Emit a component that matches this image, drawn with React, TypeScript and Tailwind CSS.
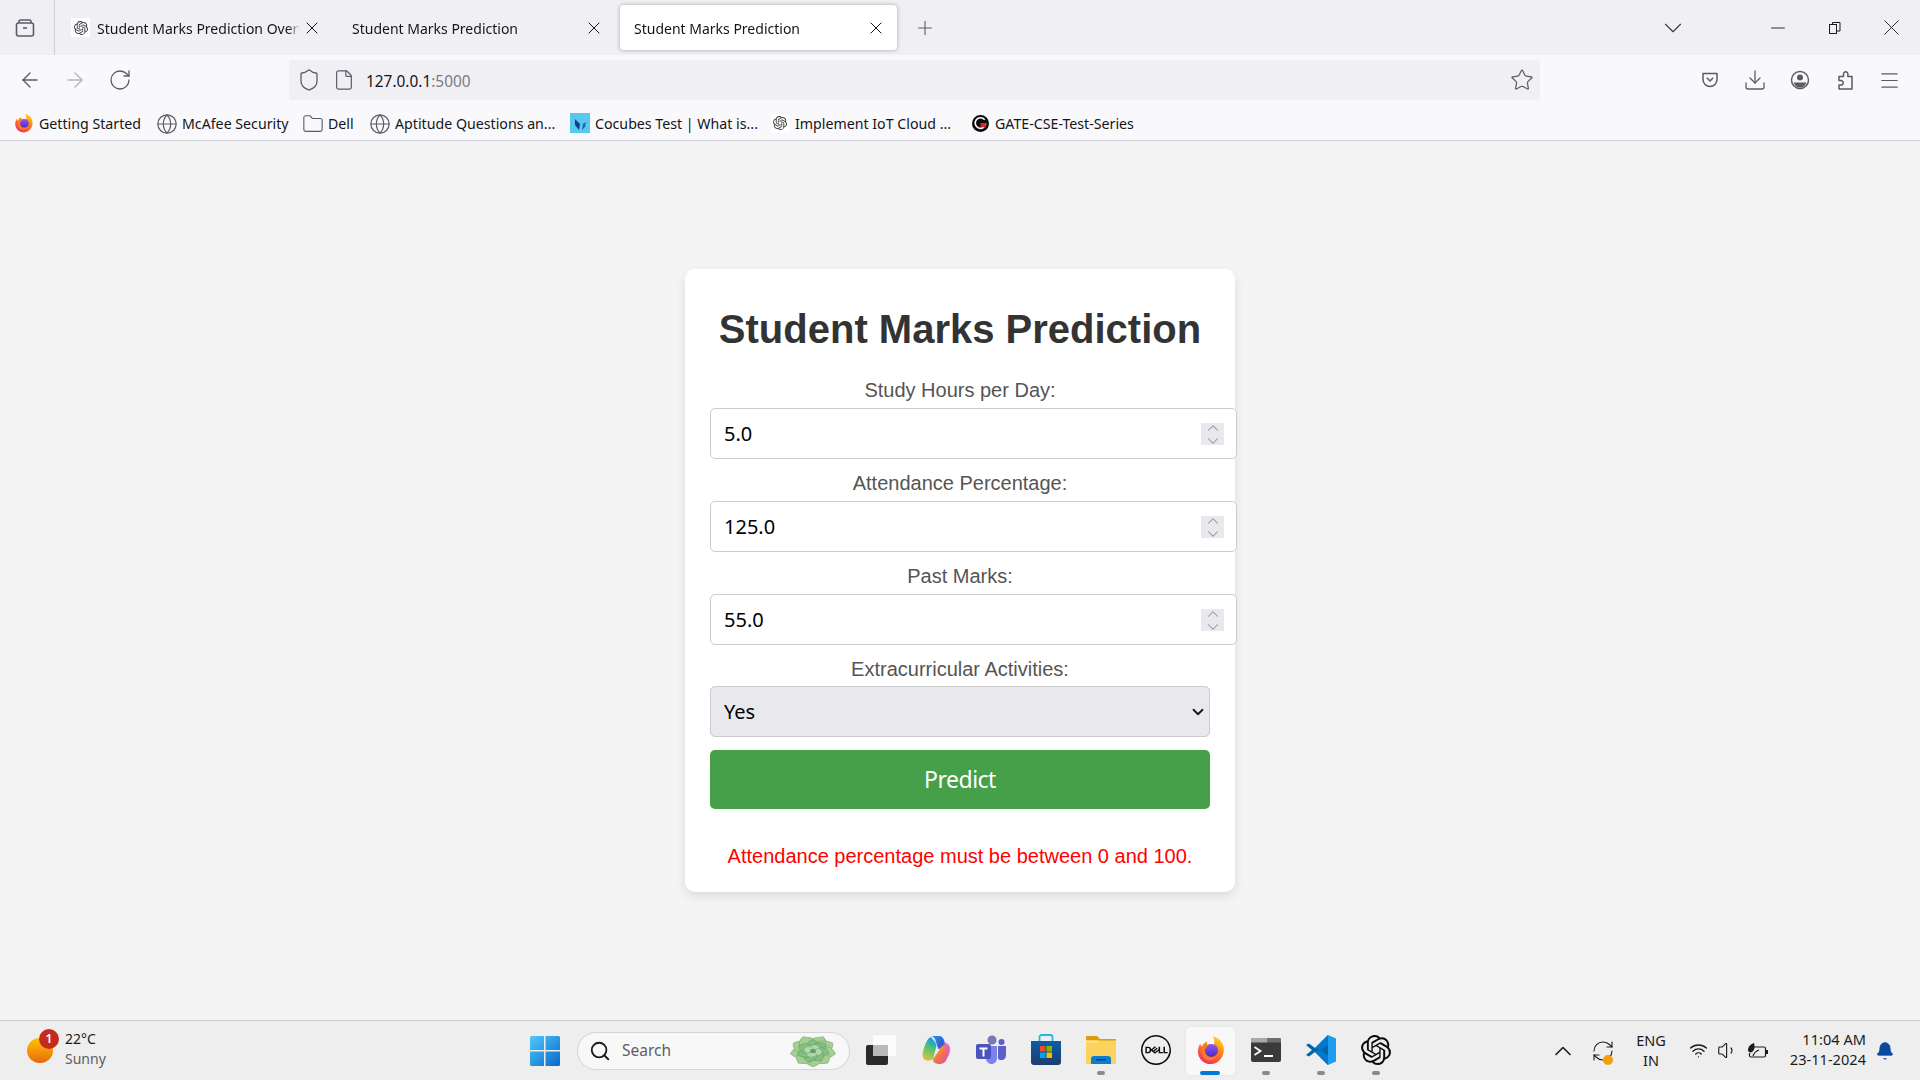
import React from 'react';
import {
  ArrowLeft,
  ArrowRight,
  Bell,
  ChevronDown,
  ChevronUp,
  Download,
  File,
  Folder,
  Globe,
  Menu,
  Minus,
  Plus,
  RefreshCw,
  RotateCw,
  Search,
  Shield,
  Star,
  Volume1,
  Wifi,
  X,
} from 'lucide-react';
import { SiOpenai, SiDell } from 'react-icons/si';

const FirefoxLogo = ({ size = 16, id = 'fx' }: { size?: number; id?: string }) => (
  <svg width={size} height={size} viewBox="0 0 32 32">
    <defs>
      <linearGradient id={`${id}-a`} x1="0.8" y1="0" x2="0.3" y2="1">
        <stop offset="0" stopColor="#ffe226" />
        <stop offset="0.4" stopColor="#ff8a16" />
        <stop offset="1" stopColor="#f02c6c" />
      </linearGradient>
      <linearGradient id={`${id}-b`} x1="0.5" y1="0" x2="0.5" y2="1">
        <stop offset="0" stopColor="#9059ff" />
        <stop offset="1" stopColor="#4f2ab8" />
      </linearGradient>
    </defs>
    <path
      fill={`url(#${id}-a)`}
      d="M16 31C8 31 2 25 2 17.5c0-3 .9-5.9 2.6-8.3.2 1.4.7 2.6 1.6 3.4C7 9.8 9.4 7.600 12 6.800c-.5 1.500-.3 2.800.3 3.600 2.500-.8 5-.6 6.800.4C20 7 19.500 3.500 18 1c5.200 1.700 9.500 5 11 10 1.500 5 .7 10.300-2.500 14.300-2.500 3.700-6.300 5.700-10.500 5.700z"
    />
    <circle cx="16.500" cy="16.500" r="7" fill={`url(#${id}-b)`} />
    <path fill="#ff7a1a" d="M6 14c2-2.500 5-3.500 7.500-2.500-2.500 1-4.500 3.500-4 6.500.5 3.500 4 6 7.500 5.500 2.500-.3 4.500-1.600 5.500-3.500-.5 4.500-4.500 7.500-9 7-5-.5-8.500-6.500-7.500-13z" />
  </svg>
);

const WindowsLogo = () => (
  <svg width="30" height="30" viewBox="0 0 30 30">
    <defs>
      <linearGradient id="win" x1="0" y1="0" x2="1" y2="1">
        <stop offset="0" stopColor="#52c8fb" />
        <stop offset="1" stopColor="#0669c9" />
      </linearGradient>
    </defs>
    <path fill="url(#win)" d="M0 1.500A1.500 1.500 0 0 1 1.500 0H14v14H0zM15.500 0H28.500A1.500 1.500 0 0 1 30 1.500V14H15.500zM0 15.500H14V30H1.500A1.500 1.500 0 0 1 0 28.500zM15.500 15.500H30V28.500A1.500 1.500 0 0 1 28.500 30H15.500z" />
  </svg>
);

const PETAL = 'M0 0C-6 -4 -6 -11 0 -15C6 -11 6 -4 0 0z';

const Succulent = () => (
  <svg width="46" height="32" viewBox="-23 -16 46 32">
    <g transform="scale(1.45 1)">
      {[-100, -60, -25, 25, 60, 100, 140, 180, 220].map((a) => (
        <path key={a} d={PETAL} fill="#a3cf90" stroke="#7fb278" strokeWidth="0.5" transform={`rotate(${a}) scale(1.35 1.05)`} />
      ))}
      {[0, 50, 100, 150, 200, 250, 300].map((a) => (
        <path key={a} d={PETAL} fill="#86bd80" stroke="#5f9c66" strokeWidth="0.5" transform={`rotate(${a}) scale(1 0.75)`} />
      ))}
      {[20, 110, 200, 290].map((a) => (
        <path key={a} d={PETAL} fill="#b1d8a9" stroke="#5f9c66" strokeWidth="0.6" transform={`rotate(${a}) scale(0.8 0.45)`} />
      ))}
      <circle r="2" fill="#5f9c66" />
    </g>
  </svg>
);

const TaskView = () => (
  <svg width="30" height="30" viewBox="0 0 30 30">
    <rect x="0" y="10" width="22" height="20" rx="2" fill="#2a2a2a" />
    <rect x="7" y="0" width="23" height="21" rx="2" fill="#ffffff" fillOpacity="0.75" />
    <rect x="7" y="10" width="15" height="11" fill="#b9b9b9" />
  </svg>
);

const Copilot = () => (
  <svg width="30" height="30" viewBox="0 0 30 30">
    <defs>
      <linearGradient id="cp-a" x1="0" y1="0" x2="1" y2="0.6">
        <stop offset="0" stopColor="#1e9be8" />
        <stop offset="1" stopColor="#3a4fd0" />
      </linearGradient>
      <linearGradient id="cp-b" x1="0" y1="0" x2="1" y2="1">
        <stop offset="0" stopColor="#f9c13c" />
        <stop offset="0.5" stopColor="#f4714a" />
        <stop offset="1" stopColor="#d64fb8" />
      </linearGradient>
      <linearGradient id="cp-c" x1="0" y1="1" x2="0.3" y2="0">
        <stop offset="0" stopColor="#f7c23c" />
        <stop offset="0.6" stopColor="#5cc46a" />
        <stop offset="1" stopColor="#19a2d8" />
      </linearGradient>
    </defs>
    <path fill="url(#cp-c)" d="M10 2C7 3 5 7 3 13c-2 6-2 10 1 12 2 1 6 1 8-1l3-11c.5-2 1-3.500-1-6z" />
    <path fill="url(#cp-a)" d="M10 1h8c3 0 4.500 2 5.300 5l2 6-8 2-3-9c-.7-2-2-3.500-4-4z" />
    <path fill="url(#cp-b)" d="M12 24c-1 3 3 5 7 5 4 0 6.500-3 8-8 1.500-5 2-10-1-11-3-.8-5 1-6.500 3z" />
    <path fill="#e25cd0" fillOpacity="0.75" d="M22 8c3-1 6 0 7 4 .8 3 0 7-2 10-1-5-2-10-5-14z" />
  </svg>
);

const Teams = () => (
  <svg width="30" height="30" viewBox="0 0 30 30">
    <circle cx="16" cy="5" r="4.500" fill="#6264a7" fillOpacity="0.85" />
    <circle cx="25.500" cy="7" r="3" fill="#5b5fc7" />
    <path fill="#7b83eb" d="M10 11h11v12c0 3.500-2.500 6-5.500 6S10 26.500 10 23z" />
    <path fill="#5b5fc7" d="M22 11h8v9c0 3-2 5-4.500 5-1.500 0-2.800-.5-3.500-1.500z" />
    <rect x="0" y="9" width="15" height="15" rx="2" fill="#4b53bc" />
    <path fill="#ffffff" d="M3.500 12.500h8v2h-3v7h-2v-7h-3z" />
  </svg>
);

const StoreLogo = () => (
  <svg width="30" height="32" viewBox="0 0 30 32">
    <defs>
      <linearGradient id="st" x1="0" y1="0" x2="0" y2="1">
        <stop offset="0" stopColor="#0b5da8" />
        <stop offset="1" stopColor="#1e3d6d" />
      </linearGradient>
    </defs>
    <path d="M8.500 7V3a2 2 0 0 1 2-2h9a2 2 0 0 1 2 2v4" fill="none" stroke="#25b6e8" strokeWidth="1.800" />
    <path fill="url(#st)" d="M0 7h30v21a3 3 0 0 1-3 3H3a3 3 0 0 1-3-3z" />
    <rect x="9" y="12" width="5.500" height="5.500" fill="#ea4e25" />
    <rect x="15.500" y="12" width="5.500" height="5.500" fill="#7fba00" />
    <rect x="9" y="18.500" width="5.500" height="5.500" fill="#00a4ef" />
    <rect x="15.500" y="18.500" width="5.500" height="5.500" fill="#ffb900" />
  </svg>
);

const Explorer = () => (
  <svg width="30" height="30" viewBox="0 0 30 30">
    <path fill="#d99e0b" d="M0 2a1 1 0 0 1 1-1h10l3 3h16v6H0z" />
    <path fill="#fcd35f" d="M0 5.500h30V29H0z" />
    <path fill="#ffe48a" d="M0 5.500h13l-2.500 2H0z" />
    <path fill="#0a7fd0" d="M5 29v-5a3 3 0 0 1 3-3h14a3 3 0 0 1 3 3v5z" />
    <rect x="10" y="24" width="10" height="1.500" fill="#05406e" />
  </svg>
);

const Terminal = () => (
  <svg width="30" height="24" viewBox="0 0 30 24">
    <rect x="0" y="0" width="30" height="24" rx="2" fill="#3a3a3a" />
    <path d="M2 0h14v4.500H0V2a2 2 0 0 1 2-2z" fill="#a9a9a9" />
    <path d="M16 0h12a2 2 0 0 1 2 2v2.500H16z" fill="#6e6e6e" />
    <path d="M3.500 9l6 4-6 4" fill="none" stroke="#ffffff" strokeWidth="1.800" />
    <rect x="13" y="17" width="9" height="2" fill="#ffffff" />
  </svg>
);

const VSCode = () => (
  <svg width="30" height="32" viewBox="0 0 30 32">
    <path fill="#0065a9" d="M22 1 9 14 3 9.500 0 11l6 5-6 5 3 1.500L9 18l13 13z" />
    <path fill="#007acc" d="M22 1v9l-8 6 8 6v9L9 18l5-2-5-2z" />
    <path fill="#1f9cf0" d="M22 1l8 3.500v23L22 31z" />
  </svg>
);

const Restore = () => (
  <svg width="14" height="14" viewBox="0 0 14 14" fill="none" stroke="#1c1c1c" strokeWidth="1">
    <rect x="1.500" y="3.500" width="7" height="9" />
    <path d="M4.500 3.500V1.500h7.500v8.500H8.500" />
  </svg>
);

const TabManager = () => (
  <svg width="20" height="20" viewBox="0 0 20 20" fill="none" stroke="#5b5b66" strokeWidth="1.600">
    <rect x="1.500" y="5" width="17" height="13" rx="2" />
    <path d="M4 5V3.500A1.500 1.500 0 0 1 5.500 2h9A1.500 1.500 0 0 1 16 3.500V5" />
    <path d="M8 10h4" />
  </svg>
);

const PocketIcon = () => (
  <svg width="18" height="18" viewBox="0 0 18 18" fill="none" stroke="#5b5b66" strokeWidth="1.500">
    <path d="M2 2.500h14v6a7 7 0 0 1-14 0z" strokeLinejoin="round" />
    <path d="M5.800 6.800 9 10l3.200-3.200" />
  </svg>
);

const AccountIcon = () => (
  <svg width="20" height="20" viewBox="0 0 20 20" fill="none" stroke="#5b5b66" strokeWidth="1.500">
    <circle cx="10" cy="10" r="8.500" />
    <circle cx="10" cy="7.500" r="3" fill="#5b5b66" stroke="none" />
    <path d="M3.500 12.500h13c-1 3-3.500 5-6.500 5s-5.500-2-6.500-5z" fill="#5b5b66" stroke="none" />
  </svg>
);

const PuzzleIcon = () => (
  <svg width="18" height="20" viewBox="0 0 18 20" fill="none" stroke="#5b5b66" strokeWidth="1.500" strokeLinejoin="round">
    <path d="M3 6.500h4.500V4a2.200 2.200 0 1 1 4.400 0v2.500H16V19H3v-4h2a2.200 2.200 0 1 0 0-4.400H3z" />
  </svg>
);

const Cocubes = () => (
  <svg width="20" height="20" viewBox="0 0 20 20">
    <rect width="20" height="20" fill="#5ac8ee" />
    <path d="M5 6l5 5-1 6-4-5z" fill="#0e3f8c" />
    <path d="M13 11l3-2-1 5-3 3z" fill="#1569b8" />
  </svg>
);

const GateLogo = () => (
  <svg width="17" height="17" viewBox="0 0 16 16">
    <circle cx="8" cy="8" r="8" fill="#0b0b0b" />
    <path d="M12 4.500A5 5 0 1 0 13 8" fill="none" stroke="#ffffff" strokeWidth="1.500" />
    <rect x="8" y="7.500" width="5" height="4" fill="#d8232a" />
  </svg>
);

const BatteryLeaf = () => (
  <svg width="22" height="18" viewBox="0 0 22 18" fill="none" stroke="#1c1c1c" strokeWidth="1.200">
    <path d="M7 5h10a1.500 1.500 0 0 1 1.500 1.500v7A1.500 1.500 0 0 1 17 15H4a1.500 1.500 0 0 1-1.500-1.500V11" />
    <rect x="19" y="8" width="2" height="4" fill="#1c1c1c" stroke="none" />
    <path d="M1 9C1 4 4 2 7 1c1 3 1 7-2 9-1 .7-3 .5-4-1z" fill="#1c1c1c" stroke="none" />
    <path d="M6 14c1-3 3-5 6-6" />
  </svg>
);

const OpenAITab = ({ size = 14 }: { size?: number }) => (
  <span className="flex h-[19px] w-[19px] flex-none items-center justify-center bg-white">
    <SiOpenai size={size} color="#3a3a3a" />
  </span>
);

const bookmarks = [
  { label: 'Getting Started', icon: <FirefoxLogo size={20} id="bm" />, cls: 'w-[143px]' },
  { label: 'McAfee Security', icon: <Globe size={22} strokeWidth={1.3} color="#5b5b66" />, cls: 'w-[146px]' },
  { label: 'Dell', icon: <Folder size={22} strokeWidth={1.2} color="#5b5b66" />, cls: 'w-[67px]' },
  { label: 'Aptitude Questions an...', icon: <Globe size={22} strokeWidth={1.3} color="#5b5b66" />, cls: 'w-[200px]' },
  { label: 'Cocubes Test | What is...', icon: <Cocubes />, cls: 'w-[200px]' },
  { label: 'Implement IoT Cloud ...', icon: <OpenAITab size={14} />, cls: 'w-[200px]' },
  { label: 'GATE-CSE-Test-Series', icon: <GateLogo />, cls: 'w-[180px]' },
];

const Tab = ({ title, active, icon }: { title: string; active?: boolean; icon?: React.ReactNode }) => (
  <div
    className={`flex h-[45px] w-[277px] flex-none items-center rounded-[4px] pr-[11px] ${
      active ? 'bg-white shadow-[0_0_4px_rgba(0,0,0,0.3)]' : ''
    } ${icon ? 'pl-[15px]' : 'pl-[14px]'}`}
  >
    {icon && <span className="mr-[7px] flex-none">{icon}</span>}
    <span className="mt-[2px] min-w-0 flex-1 overflow-hidden whitespace-nowrap text-[14px] text-[#15141a] [mask-image:linear-gradient(to_left,transparent,black_12px)]">
      {title}
    </span>
    <X size={20} strokeWidth={1.2} color="#15141a" className="ml-[2px] flex-none" />
  </div>
);

const NumberField = ({ label, value }: { label: string; value: string }) => (
  <div className="mb-[12px]">
    <label className="mb-[6px] block text-center text-[20px] leading-[24px] text-[#555555]">{label}</label>
    <div className="relative h-[51px] w-[527px]">
      <input
        type="text"
        readOnly
        value={value}
        className="h-full w-full rounded-[5px] border border-[#cccccc] bg-white px-[13px] font-['Noto_Sans',sans-serif] text-[20px] text-black outline-none"
      />
      <div className="absolute right-[13px] top-[15px] flex h-[22px] w-[23px] flex-col items-center justify-center bg-[#e9e9ed]">
        <ChevronUp size={18} strokeWidth={1.4} color="#8f8f9d" className="-mb-[5px] -mt-[5px]" />
        <ChevronDown size={18} strokeWidth={1.4} color="#8f8f9d" className="-mb-[5px]" />
      </div>
    </div>
  </div>
);

const TaskIcon = ({ children, running, active }: { children: React.ReactNode; running?: boolean; active?: boolean }) => (
  <div className="relative flex h-[48px] w-[55px] flex-none items-center justify-center">
    {active && <div className="absolute inset-y-0 left-[3px] w-[49px] rounded-[4px] bg-[#f8f8f8] shadow-[0_0_1px_rgba(0,0,0,0.2)]" />}
    <div className="relative -mt-[1px] flex">{children}</div>
    {running && !active && <div className="absolute bottom-[0px] left-[24px] h-[4px] w-[8px] rounded-full bg-[#8a8a8a]" />}
    {active && <div className="absolute bottom-[0px] left-[17px] h-[4px] w-[20px] rounded-full bg-[#0078d4]" />}
  </div>
);

export default function App() {
  return (
    <div className="flex h-[1080px] w-[1920px] flex-col overflow-hidden bg-[#f4f4f4] font-['Liberation_Sans',Arial,sans-serif]">
      {/* Browser tabs */}
      <div className="flex h-[55px] flex-none items-center bg-[#f0f0f4] font-['Noto_Sans',sans-serif]">
        <div className="flex h-full w-[55px] flex-none items-center border-r border-[#cfcfd8] pl-[15px]">
          <TabManager />
        </div>
        <div className="flex items-center gap-[5px] pl-[1px]">
          <Tab title="Student Marks Prediction Overview" icon={<OpenAITab />} />
          <Tab title="Student Marks Prediction" />
          <Tab title="Student Marks Prediction" active />
        </div>
        <div className="flex w-[56px] flex-none justify-center">
          <Plus size={22} strokeWidth={1.2} color="#5b5b66" />
        </div>
        <div className="flex w-[730px] flex-none justify-end">
          <ChevronDown size={30} strokeWidth={0.9} color="#3a3a44" className="-mr-[5px]" />
        </div>
        <div className="ml-[66px] flex w-[57px] flex-none justify-center">
          <Minus size={22} strokeWidth={1} color="#1c1c1c" />
        </div>
        <div className="flex w-[57px] flex-none justify-center">
          <Restore />
        </div>
        <div className="flex w-[57px] flex-none justify-center">
          <X size={27} strokeWidth={0.8} color="#1c1c1c" />
        </div>
      </div>

      {/* Toolbar */}
      <div className="flex h-[50px] flex-none items-center bg-[#f9f9fb] font-['Noto_Sans',sans-serif]">
        <div className="flex w-[289px] flex-none items-center pl-[7px]">
          <span className="flex w-[45px] justify-center"><ArrowLeft size={24} strokeWidth={1.4} color="#5b5b66" /></span>
          <span className="flex w-[45px] justify-center"><ArrowRight size={24} strokeWidth={1.4} color="#b4b4bb" /></span>
          <span className="flex w-[45px] justify-center"><RotateCw size={24} strokeWidth={1.3} color="#5b5b66" /></span>
        </div>
        <div className="flex h-[40px] w-[1251px] flex-none items-center rounded-[4px] bg-[#f0f0f4] pl-[8px] pr-[6px]">
          <Shield size={24} strokeWidth={1.3} color="#5b5b66" />
          <File size={22} strokeWidth={1.3} color="#5b5b66" className="ml-[12px]" />
          <span className="ml-[11px] mt-[3px] text-[15.400px] text-[#15141a]">
            127.0.0.1<span className="text-[#7c7c85]">:5000</span>
          </span>
          <Star size={24} strokeWidth={1.2} color="#5b5b66" className="ml-auto" />
        </div>
        <div className="flex flex-1 items-center pl-[147px]">
          <span className="flex w-[45px] justify-center"><PocketIcon /></span>
          <span className="flex w-[45px] justify-center"><Download size={24} strokeWidth={1.3} color="#5b5b66" /></span>
          <span className="flex w-[45px] justify-center"><AccountIcon /></span>
          <span className="flex w-[45px] justify-center"><PuzzleIcon /></span>
          <span className="flex w-[45px] justify-center"><Menu size={23} strokeWidth={1.3} color="#5b5b66" /></span>
        </div>
      </div>

      {/* Bookmarks */}
      <div className="flex h-[36px] flex-none items-center border-b border-[#cfcfd8] bg-[#f9f9fb] pl-[13px] pt-[2px] font-['Noto_Sans',sans-serif] text-[14.200px] text-[#15141a]">
        {bookmarks.map((b) => (
          <div key={b.label} className={`flex flex-none items-center gap-[4px] whitespace-nowrap ${b.cls}`}>
            <span className="flex w-[22px] flex-none justify-center">{b.icon}</span>
            <span>{b.label}</span>
          </div>
        ))}
      </div>

      {/* Page */}
      <div className="flex flex-1 items-center justify-center">
        <div className="w-[550px] rounded-[10px] bg-white px-[25px] pb-[24px] pt-[37px] shadow-[0_4px_10px_rgba(0,0,0,0.1)]">
          <h1 className="mb-[26px] whitespace-nowrap text-center text-[40px] font-bold leading-[46px] text-[#333333]">
            Student Marks Prediction
          </h1>
          <NumberField label="Study Hours per Day:" value="5.0" />
          <NumberField label="Attendance Percentage:" value="125.0" />
          <NumberField label="Past Marks:" value="55.0" />
          <label className="mb-[5px] block text-center text-[20px] leading-[24px] text-[#555555]">
            Extracurricular Activities:
          </label>
          <div className="relative h-[51px] w-[500px]">
            <select className="h-full w-full appearance-none rounded-[5px] border border-[#cccccc] bg-[#e9e9ed] px-[13px] font-['Noto_Sans',sans-serif] text-[20px] text-black outline-none">
              <option>Yes</option>
              <option>No</option>
            </select>
            <ChevronDown size={18} strokeWidth={2.4} color="#15141a" className="pointer-events-none absolute right-[3px] top-[17px]" />
          </div>
          <button className="mt-[13px] h-[59px] w-[500px] rounded-[5px] bg-[#45a049] font-['Noto_Sans',sans-serif] text-[23px] tracking-[-0.5px] text-white">
            Predict
          </button>
          <p className="mt-[35px] text-center text-[20px] leading-[24px] text-[#ff0000]">
            Attendance percentage must be between 0 and 100.
          </p>
        </div>
      </div>

      {/* Taskbar */}
      <div className="flex h-[60px] flex-none items-center border-t border-[#c9c9c9] bg-[#eeeeee] font-['Noto_Sans',sans-serif]">
        <div className="relative flex w-[525px] flex-none items-center pl-[27px]">
          <div className="h-[25px] w-[26px] rounded-full bg-gradient-to-b from-[#ffc400] to-[#e8670c]" />
          <div className="absolute left-[39px] top-[-3px] flex h-[20px] w-[20px] items-center justify-center rounded-full bg-[#c42b1c] text-[12px] font-semibold text-white">
            1
          </div>
          <div className="-mt-[3px] ml-[12px] text-[14px] leading-[20px]">
            <div className="text-[#1c1c1c]">22°C</div>
            <div className="text-[#5f5f5f]">Sunny</div>
          </div>
        </div>
        <div className="flex w-[52px] flex-none items-center pl-[5px]">
          <WindowsLogo />
        </div>
        <div className="flex h-[38px] w-[273px] flex-none items-center rounded-full border border-[#d4d4d4] bg-[#f8f8f8] pl-[11px] pr-[13px]">
          <Search size={22} strokeWidth={2} color="#1c1c1c" />
          <span className="ml-[11px] text-[15.500px] text-[#5f5f5f]">Search</span>
          <span className="ml-auto flex"><Succulent /></span>
        </div>
        <div className="flex flex-none items-center pl-[3px]">
          <TaskIcon><TaskView /></TaskIcon>
          <TaskIcon><Copilot /></TaskIcon>
          <TaskIcon><Teams /></TaskIcon>
          <TaskIcon><StoreLogo /></TaskIcon>
          <TaskIcon running><Explorer /></TaskIcon>
          <TaskIcon><SiDell size={30} color="#0b0b0b" /></TaskIcon>
          <TaskIcon active><FirefoxLogo size={30} id="tb" /></TaskIcon>
          <TaskIcon running><Terminal /></TaskIcon>
          <TaskIcon running><VSCode /></TaskIcon>
          <TaskIcon running><SiOpenai size={30} color="#0b0b0b" /></TaskIcon>
        </div>
        <div className="flex flex-1 items-center pl-[145px] text-[#1c1c1c]">
          <span className="flex w-[30px] justify-center"><ChevronUp size={28} strokeWidth={1.4} color="#1c1c1c" /></span>
          <div className="relative ml-[5px] flex w-[40px] justify-center">
            <RefreshCw size={24} strokeWidth={1.1} color="#1c1c1c" />
            <div className="absolute bottom-[-2px] left-[20px] h-[10px] w-[10px] rounded-full bg-[#f59e0b]" />
          </div>
          <div className="-mt-[2px] ml-[4px] w-[48px] text-center text-[14.500px] leading-[20px]">
            <div>ENG</div>
            <div>IN</div>
          </div>
          <span className="ml-[8px] flex w-[30px] justify-center"><Wifi size={19} strokeWidth={1.7} color="#1c1c1c" /></span>
          <span className="flex w-[28px] justify-center"><Volume1 size={21} strokeWidth={1.3} color="#1c1c1c" /></span>
          <span className="flex w-[34px] justify-center"><BatteryLeaf /></span>
          <div className="-mt-[3px] w-[91px] text-right text-[14.600px] leading-[20px]">
            <div>11:04 AM</div>
            <div>23-11-2024</div>
          </div>
          <span className="flex w-[38px] justify-center"><Bell size={20} strokeWidth={1} color="#0a4a9e" fill="#0a4a9e" /></span>
        </div>
      </div>
    </div>
  );
}
